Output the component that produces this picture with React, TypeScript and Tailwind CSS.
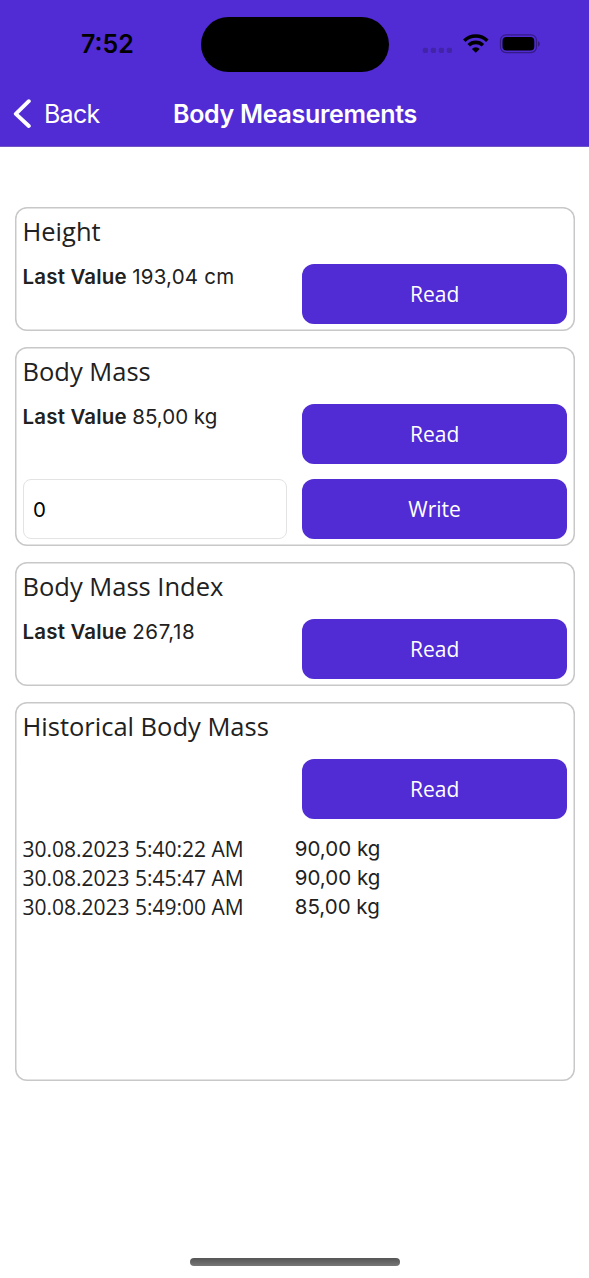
import type { ReactNode } from "react";

const inter = "font-[Inter,'Liberation_Sans',sans-serif]";
const openSans = "font-['Open_Sans','Noto_Sans',sans-serif]";

function StatusBar() {
  return (
    <div className="flex h-[87px] items-start">
      <div className="w-[201px] pt-[29px] pl-[81px]">
        <span className={`${inter} block text-[25px] leading-[30px] font-semibold text-black`}>7:52</span>
      </div>
      <div className="mt-[17px] h-[55px] w-[188px] rounded-full bg-black" />
      <div className="flex pt-[34px] pl-[33px]">
        <svg width="120" height="21" viewBox="0 0 120 21" fill="none">
          <g fill="#4124a8">
            <rect x="0.8" y="13.7" width="5.2" height="5.4" rx="1.8" />
            <rect x="8.8" y="13.7" width="5.2" height="5.4" rx="1.8" />
            <rect x="16.8" y="13.7" width="5.2" height="5.4" rx="1.8" />
            <rect x="24.8" y="13.7" width="5.2" height="5.4" rx="1.8" />
          </g>
          <g stroke="#000" strokeWidth="3.6">
            <path d="M42.3 6.7a16.6 16.6 0 0 1 23 0" />
            <path d="M46.7 11.3a10.2 10.2 0 0 1 14.2 0" />
          </g>
          <path d="M53.8 18.8l-3.9-3.9a5.7 5.7 0 0 1 7.8 0z" fill="#000" />
          <rect x="78.5" y="0.8" width="36" height="17.8" rx="5.6" stroke="#351b86" strokeWidth="1.2" />
          <rect x="80.5" y="2.9" width="31.8" height="13.6" rx="4" fill="#000" />
          <path d="M116 7.2c2.4.7 2.4 4.5 0 5.2z" fill="#351b86" />
        </svg>
      </div>
    </div>
  );
}

function NavBar() {
  return (
    <div className={`${inter} flex h-[60px] items-center border-b border-[#6f55c4] pb-[6px] text-white`}>
      <div className="flex w-[173px] items-center pl-[13px]">
        <svg width="20" height="30" viewBox="0 0 20 30" fill="none">
          <path d="M15.8 2.2L2.8 14.8l13 12.2" stroke="#fff" strokeWidth="3.9" strokeLinecap="round" strokeLinejoin="round" />
        </svg>
        <span className="ml-[11px] text-[25px] leading-[30px] tracking-[-0.75px]">Back</span>
      </div>
      <h1 className="text-[25px] leading-[30px] font-semibold tracking-[-0.3px] whitespace-nowrap">Body Measurements</h1>
    </div>
  );
}

function Card({ title, className, children }: { title: string; className: string; children: ReactNode }) {
  return (
    <section className={`rounded-[12px] px-[7.5px] pt-[7.5px] shadow-[inset_0_0_0_1.5px_#c8c8c8] ${className}`}>
      <h2 className={`${openSans} h-[50px] text-[25.5px] leading-[35px] text-[#212121]`}>{title}</h2>
      {children}
    </section>
  );
}

function Action({ children }: { children: ReactNode }) {
  return (
    <button className={`${openSans} h-[60px] w-full rounded-[12px] bg-[#512bd4] pt-[2px] text-[21px] text-white`}>
      {children}
    </button>
  );
}

function LastValue({ value, tracking }: { value: string; tracking: string }) {
  return (
    <p className={`${inter} text-[20.5px] leading-[26px] whitespace-nowrap text-[#212121]`}>
      <span className="font-semibold tracking-[0.18px]">Last Value </span>
      <span className={tracking}>{value}</span>
    </p>
  );
}

const history = [
  { date: "30.08.2023 5:40:22 AM", value: "90,00 kg" },
  { date: "30.08.2023 5:45:47 AM", value: "90,00 kg" },
  { date: "30.08.2023 5:49:00 AM", value: "85,00 kg" },
];

export default function App() {
  return (
    <div className="flex h-[1278px] w-[589px] flex-col overflow-hidden bg-white">
      <header className="bg-[#512bd4]">
        <StatusBar />
        <NavBar />
      </header>
      <main className="flex flex-1 flex-col gap-[15.5px] pt-[59.5px] pr-[14.5px] pl-[15px]">
        <Card title="Height" className="h-[124.5px]">
          <div className="grid grid-cols-2 gap-[15px]">
            <LastValue value="193,04 cm" tracking="tracking-[0.2px]" />
            <Action>Read</Action>
          </div>
        </Card>
        <Card title="Body Mass" className="h-[199.5px]">
          <div className="grid grid-cols-2 gap-[15px]">
            <LastValue value="85,00 kg" tracking="tracking-normal" />
            <Action>Read</Action>
            <input
              defaultValue="0"
              className={`${inter} h-[60px] w-full rounded-[8px] border border-[#e3e3e3] px-[9.5px] text-[20.5px] text-black`}
            />
            <Action>Write</Action>
          </div>
        </Card>
        <Card title="Body Mass Index" className="h-[124.5px]">
          <div className="grid grid-cols-2 gap-[15px]">
            <LastValue value="267,18" tracking="tracking-[0.6px]" />
            <Action>Read</Action>
          </div>
        </Card>
        <Card title="Historical Body Mass" className="h-[379.5px]">
          <div className="grid grid-cols-2 gap-[15px]">
            <div />
            <Action>Read</Action>
          </div>
          <ul className="pt-[15px] text-[21px] leading-[29px] text-[#212121]">
            {history.map((row) => (
              <li key={row.date} className="grid h-[29px] grid-cols-2">
                <span className={`${openSans} pt-px`}>{row.date}</span>
                <span className={`${inter} text-[20.5px]`}>{row.value}</span>
              </li>
            ))}
          </ul>
        </Card>
      </main>
      <footer className="flex justify-center pb-[12px]">
        <div className="h-[8px] w-[210px] rounded-full bg-gradient-to-b from-[#555] to-[#777]" />
      </footer>
    </div>
  );
}
